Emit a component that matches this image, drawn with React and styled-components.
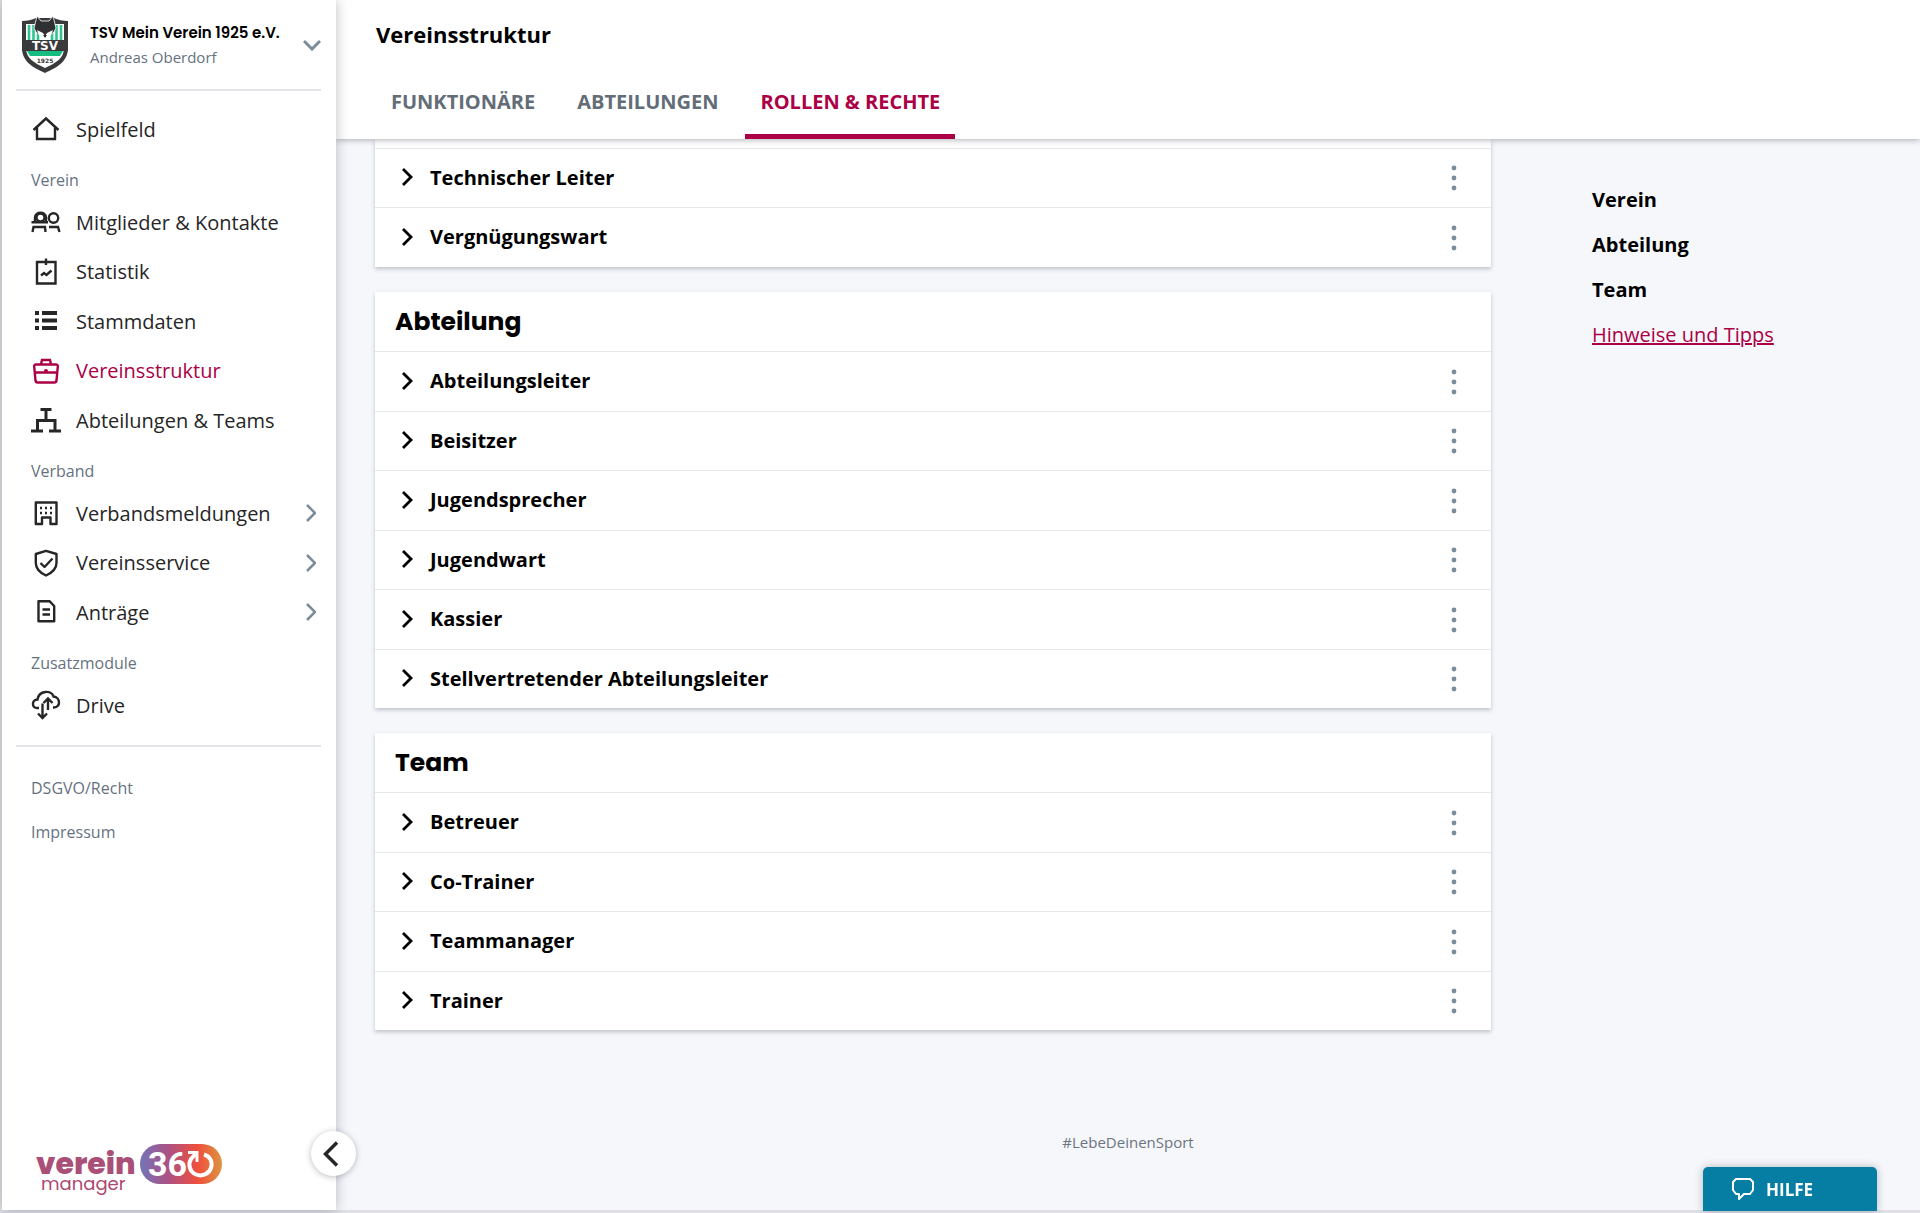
import React, { useState } from "react";
import styled, { createGlobalStyle } from "styled-components";

const sections = [
  {
    title: "Verein",
    items: [
      { icon: "members", label: "Mitglieder & Kontakte" },
      { icon: "stats", label: "Statistik" },
      { icon: "list", label: "Stammdaten" },
      { icon: "briefcase", label: "Vereinsstruktur", active: true },
      { icon: "org", label: "Abteilungen & Teams" },
    ],
  },
  {
    title: "Verband",
    items: [
      { icon: "building", label: "Verbandsmeldungen", more: true },
      { icon: "shield", label: "Vereinsservice", more: true },
      { icon: "document", label: "Anträge", more: true },
    ],
  },
  {
    title: "Zusatzmodule",
    items: [{ icon: "cloud", label: "Drive" }],
  },
];

const tabs = ["Funktionäre", "Abteilungen", "Rollen & Rechte"];

const groups = [
  {
    title: "Abteilung",
    roles: [
      "Abteilungsleiter",
      "Beisitzer",
      "Jugendsprecher",
      "Jugendwart",
      "Kassier",
      "Stellvertretender Abteilungsleiter",
    ],
  },
  {
    title: "Team",
    roles: ["Betreuer", "Co-Trainer", "Teammanager", "Trainer"],
  },
];

const icons = {
  home: <path d="M2.5 16L15 4.5L27.5 16M6 13.5V25H24V13.5" />,
  members: (
    <>
      <circle cx="9.5" cy="10.5" r="4" />
      <path d="M4 15V10.5C4 4 15 4 15 10.5V15M.5 15.3H17M1.5 25L2.5 20H14L14.5 25M18 20H27L28.5 25" />
      <circle cx="22.5" cy="11" r="4.7" />
    </>
  ),
  stats: (
    <path d="M6 5H24.5V26.5H6ZM15 1.5V8M10 18.5L13 16L15.5 18L20.5 13.5" />
  ),
  list: (
    <>
      <path d="M4 7H8M4 14.5H8M4 22H8" strokeWidth="4" />
      <path d="M11 7H26M11 14.5H26M11 22H26" strokeWidth="4" />
    </>
  ),
  briefcase: (
    <>
      <path d="M5 8.5H25Q27 8.5 26.8 10.5L25.5 24.5Q25.2 26.5 23.5 26.5H6.5Q4.8 26.5 4.5 24.5L3.2 10.5Q3 8.5 5 8.5ZM10 8L11 4H19L20 8M3.8 16.5H26.2" />
      <circle cx="15" cy="15" r="2" fill="currentColor" stroke="none" />
    </>
  ),
  org: (
    <path
      d="M9.5 4.5H20.5M15 4.5V15M0 26H12M6.5 26V15.5H24V26M18 26H30"
      strokeWidth="3"
    />
  ),
  building: (
    <>
      <path
        d="M4.8 4.5H25.5V26H19.5V19.5H11V26H4.8Z"
        strokeLinejoin="round"
      />
      <path d="M9 10H11M14 10H16M19 10H21M9 15H11M14 15H16M19 15H21" />
    </>
  ),
  shield: (
    <path
      d="M15 2.8L25.5 6V15C25.5 20.5 21.5 24.5 15 27.5C8.500 24.5 4.8 20.5 4.8 15V6ZM9.5 15L13.5 19L21.5 10.5"
      strokeLinejoin="round"
    />
  ),
  document: (
    <path
      d="M7.5 4.2H18.5L23.2 9V24.2H7.5ZM11.5 12.5H19M11.5 17.5H19"
      strokeLinejoin="round"
    />
  ),
  cloud: (
    <path d="M8 18H6C.5 18 .5 9.5 6.5 9.5C8 0 20.5 0 22.5 6.5C29.5 7 30 17.5 23 17.5H22M17 20V8.5M12.5 13L17 8.5L21.5 13M11.5 13.5V28M7 23.5L11.5 28L16 23.5" />
  ),
};

const Icon = ({ name }) => (
  <IconSvg viewBox="0 0 30 30" aria-hidden="true">
    {icons[name]}
  </IconSvg>
);

const Crest = () => (
  <svg width="48" height="58" viewBox="0 0 48 58" aria-hidden="true">
    <path
      d="M0 5C5 5 10 4 14 2H32C36 4 41 5 46 5V32C46 45 36 51 23 57C10 51 0 45 0 32Z"
      fill="#3a3a3d"
    />
    <path d="M4 8H42V32C42 42 34 47 23 52C12 47 4 42 4 32Z" fill="#fff" />
    <path
      d="M7 9V24M11.500 9V24M16 17V24M30 17V24M34.500 9V24M39 9V24"
      stroke="#2fc48d"
      strokeWidth="2.6"
    />
    <path
      d="M15 0L19 5H27L31 0L34 12L32 16L23 23L14 16L12 12Z"
      fill="#303033"
      stroke="#fff"
      strokeWidth="0.8"
    />
    <path
      d="M15 14L21 17L23 20L25 17L31 14L29 19L23 24L17 19Z"
      fill="#fff"
    />
    <path d="M21 19H25L23 22Z" fill="#303033" />
    <path d="M0 24H46V35H0Z" fill="#3a3a3d" />
    <path d="M5 35H41L38 40H8Z" fill="#16bd80" />
    <CrestText x="23" y="34" textAnchor="middle" fill="#fff">
      TSV
    </CrestText>
    <CrestYear x="23" y="47" textAnchor="middle" fill="#3a3a3d">
      1925
    </CrestYear>
  </svg>
);

const Brand = () => (
  <svg
    width="190"
    height="56"
    viewBox="0 0 190 56"
    role="img"
    aria-label="verein 360 manager"
  >
    <defs>
      <linearGradient id="pill">
        <stop offset="0" stopColor="#7374b8" />
        <stop offset="0.35" stopColor="#ad5184" />
        <stop offset="0.7" stopColor="#ef4f3d" />
        <stop offset="1" stopColor="#dd9440" />
      </linearGradient>
    </defs>
    <text>
      <BrandName x="0" y="34" fill="#a94f78">
        verein
      </BrandName>
      <BrandSub x="5" y="50" fill="#ad4770">
        manager
      </BrandSub>
    </text>
    <rect x="104" y="4" width="82" height="40" rx="20" fill="url(#pill)" />
    <BrandDigits x="112" y="36" fill="#fff">
      36
    </BrandDigits>
    <path
      d="M168 14.5C174 16 177 22 175 28C173 34 166 37 160 34.5C154 32 151.5 25 155 19L160 13.5"
      fill="none"
      stroke="#fff"
      strokeWidth="4"
    />
    <path
      d="M152 12.5H161V22"
      fill="none"
      stroke="#fff"
      strokeWidth="3"
    />
  </svg>
);

const NavItem = ({ icon, label, active, more }) => (
  <NavEntry>
    <NavLink href="#" $active={active}>
      <Icon name={icon} />
      <NavText>{label}</NavText>
      {more && (
        <MoreArrow viewBox="0 0 10 18" aria-hidden="true">
          <path d="M1 1L9 9L1 17" />
        </MoreArrow>
      )}
    </NavLink>
  </NavEntry>
);

const RoleRow = ({ name }) => (
  <Row>
    <RoleButton type="button">
      <RoleArrow viewBox="0 0 11 18" aria-hidden="true">
        <path d="M1 1L9 9L1 17" />
      </RoleArrow>
      {name}
    </RoleButton>
    <MenuButton type="button" aria-label={`Optionen ${name}`}>
      <svg width="6" height="26" viewBox="0 0 6 26" fill="currentColor">
        <circle cx="3" cy="3" r="2.4" />
        <circle cx="3" cy="13" r="2.4" />
        <circle cx="3" cy="23" r="2.4" />
      </svg>
    </MenuButton>
  </Row>
);

const App = () => {
  const [tab, setTab] = useState(tabs[2]);

  return (
    <Page>
      <GlobalStyle />
      <Sidebar>
        <ClubButton type="button">
          <Crest />
          <ClubInfo>
            <ClubName>TSV Mein Verein 1925 e.V.</ClubName>
            <UserName>Andreas Oberdorf</UserName>
          </ClubInfo>
          <ClubArrow viewBox="0 0 18 12" aria-hidden="true">
            <path d="M1 2L9 10L17 2" />
          </ClubArrow>
        </ClubButton>
        <Nav>
          <NavList>
            <NavItem icon="home" label="Spielfeld" />
          </NavList>
          {sections.map((section) => (
            <React.Fragment key={section.title}>
              <NavTitle>{section.title}</NavTitle>
              <NavList>
                {section.items.map((item) => (
                  <NavItem key={item.label} {...item} />
                ))}
              </NavList>
            </React.Fragment>
          ))}
        </Nav>
        <LegalLinks>
          <a href="#">DSGVO/Recht</a>
          <a href="#">Impressum</a>
        </LegalLinks>
        <BrandArea>
          <Brand />
        </BrandArea>
        <CollapseButton type="button" aria-label="Menü einklappen">
          <svg width="16" height="26" viewBox="0 0 16 26" aria-hidden="true">
            <path
              d="M14 1.5L2.5 13L14 24.5"
              fill="none"
              stroke="#262626"
              strokeWidth="3.5"
            />
          </svg>
        </CollapseButton>
      </Sidebar>

      <Main>
        <Header>
          <Title>Vereinsstruktur</Title>
          <Tabs role="tablist">
            {tabs.map((name) => (
              <Tab
                key={name}
                type="button"
                role="tab"
                aria-selected={tab === name}
                $active={tab === name}
                onClick={() => setTab(name)}
              >
                {name}
              </Tab>
            ))}
          </Tabs>
        </Header>
        <Content>
          <Groups>
            <Card $continued>
              <RoleRow name="Technischer Leiter" />
              <RoleRow name="Vergnügungswart" />
            </Card>
            {groups.map((group) => (
              <Card key={group.title}>
                <CardTitle>{group.title}</CardTitle>
                {group.roles.map((role) => (
                  <RoleRow key={role} name={role} />
                ))}
              </Card>
            ))}
          </Groups>
          <Anchors>
            <AnchorLink href="#">Verein</AnchorLink>
            <AnchorLink href="#">Abteilung</AnchorLink>
            <AnchorLink href="#">Team</AnchorLink>
            <TipsLink href="#">Hinweise und Tipps</TipsLink>
          </Anchors>
        </Content>
        <Footer>#LebeDeinenSport</Footer>
      </Main>

      <HelpButton type="button">
        <svg width="24" height="24" viewBox="0 0 24 24" aria-hidden="true">
          <path
            d="M5 2H19L22 5V13L19 17H13L8 22V17H5L2 13V5Z"
            fill="none"
            stroke="#fff"
            strokeWidth="2"
            strokeLinejoin="round"
          />
        </svg>
        HILFE
      </HelpButton>
    </Page>
  );
};

const GlobalStyle = createGlobalStyle`
  * {
    box-sizing: border-box;
  }
  body {
    margin: 0;
    background-color: #f5f7fb;
    color: #000;
    font-family: "Open Sans", "Noto Sans", sans-serif;
    font-size: 20px;
  }
  button {
    border: 0;
    padding: 0;
    background: none;
    color: inherit;
    font: inherit;
    cursor: pointer;
  }
`;

const Page = styled.div`
  display: flex;
  min-height: 100vh;
  border-left: 2px solid #e2e3e7;
  border-bottom: 3px solid #dfdfe5;
`;

const Sidebar = styled.aside`
  position: relative;
  z-index: 2;
  display: flex;
  flex-direction: column;
  flex: 0 0 334px;
  background-color: #fff;
  box-shadow: 0 0 12px rgba(30, 35, 50, 0.3);
`;

const ClubButton = styled.button`
  display: flex;
  align-items: center;
  height: 91px;
  margin: 0 15px 0 14px;
  padding-left: 6px;
  gap: 20px;
  border-bottom: 2px solid #e3e5e8;
  text-align: left;
`;

const ClubInfo = styled.span`
  display: flex;
  flex: 1;
  flex-direction: column;
`;

const ClubName = styled.span`
  font-family: Poppins, Inter, sans-serif;
  font-size: 15px;
  line-height: 24px;
  font-weight: 600;
  white-space: nowrap;
`;

const UserName = styled.span`
  font-size: 15px;
  line-height: 24px;
  color: #66727f;
`;

const ClubArrow = styled.svg`
  width: 18px;
  height: 12px;
  fill: none;
  stroke: #7b8d9a;
  stroke-width: 3;
`;

const Nav = styled.nav`
  padding-top: 13px;
`;

const NavList = styled.ul`
  margin: 0;
  padding: 0;
  list-style: none;
`;

const NavEntry = styled.li`
  height: 50px;

  &:nth-child(even) {
    height: 49px;
  }
`;

const NavLink = styled.a`
  display: flex;
  align-items: center;
  height: 100%;
  gap: 15px;
  padding: 0 20px 0 29px;
  color: ${({ $active }) => ($active ? "#ab0046" : "#262626")};
  text-decoration: none;
`;

const NavText = styled.span`
  flex: 1;
  white-space: nowrap;
`;

const NavTitle = styled.h2`
  margin: 0;
  padding: 14px 29px 5px;
  font-size: 16px;
  line-height: 24px;
  font-weight: 400;
  color: #66727f;
`;

const IconSvg = styled.svg`
  width: 30px;
  height: 30px;
  fill: none;
  stroke: currentColor;
  stroke-width: 2.4;
  overflow: visible;
`;

const MoreArrow = styled.svg`
  width: 10px;
  height: 18px;
  fill: none;
  stroke: #7b8d9a;
  stroke-width: 2.5;
`;

const LegalLinks = styled.div`
  display: flex;
  flex-direction: column;
  gap: 20px;
  margin: 15px 15px 0 14px;
  padding: 29px 15px;
  border-top: 2px solid #e3e5e8;
  font-size: 16px;
  line-height: 24px;

  a {
    color: #66727f;
    text-decoration: none;
  }
`;

const BrandArea = styled.div`
  display: flex;
  margin-top: auto;
  padding: 0 34px 14px;
`;

const BrandName = styled.tspan`
  font-family: Poppins, Inter, sans-serif;
  font-size: 30px;
  font-weight: 800;
`;

const BrandSub = styled.tspan`
  font-family: Poppins, Inter, sans-serif;
  font-size: 18px;
`;

const BrandDigits = styled.text`
  font-family: Roboto, sans-serif;
  font-size: 34px;
  font-weight: 700;
`;

const CrestText = styled.text`
  font-family: "DejaVu Sans", sans-serif;
  font-size: 12px;
  font-weight: 700;
`;

const CrestYear = styled.text`
  font-family: "DejaVu Sans", sans-serif;
  font-size: 6px;
  font-weight: 700;
`;

const CollapseButton = styled.button`
  position: absolute;
  right: -20px;
  bottom: 34px;
  display: flex;
  align-items: center;
  justify-content: center;
  width: 45px;
  height: 45px;
  padding-right: 6px;
  border-radius: 50%;
  background-color: #fff;
  box-shadow: 0 1px 6px rgba(30, 35, 50, 0.3);
`;

const Main = styled.main`
  flex: 1;
  min-width: 0;
`;

const Header = styled.header`
  position: relative;
  z-index: 1;
  padding: 17px 40px 0;
  background-color: #fff;
  box-shadow: 0 1px 6px rgba(30, 35, 50, 0.35);
`;

const Title = styled.h1`
  margin: 0;
  font-size: 22px;
  line-height: 34px;
  font-weight: 700;
`;

const Tabs = styled.div`
  display: flex;
  gap: 12px;
  padding-top: 15px;
`;

const Tab = styled.button`
  height: 73px;
  padding: 3px 15px 0;
  border-bottom: 5px solid
    ${({ $active }) => ($active ? "#ab0046" : "transparent")};
  color: ${({ $active }) => ($active ? "#ab0046" : "#626d78")};
  font-weight: 700;
  text-transform: uppercase;
`;

const Content = styled.div`
  display: flex;
  gap: 101px;
  padding-left: 39px;
`;

const Groups = styled.div`
  display: flex;
  flex: 1;
  flex-direction: column;
  gap: 25px;
`;

const Card = styled.section`
  padding-top: ${({ $continued }) => ($continued ? "9px" : "0")};
  background-color: #fff;
  box-shadow: 0 2px 4px rgba(30, 35, 50, 0.25);
`;

const CardTitle = styled.h2`
  height: 59px;
  margin: 0;
  padding: 0 20px;
  font-family: Poppins, Inter, sans-serif;
  font-size: 25px;
  line-height: 60px;
  font-weight: 700;
`;

const Row = styled.div`
  display: flex;
  align-items: center;
  height: 59px;
  padding: 0 25px 0 27px;
  border-top: 1px solid #e6e8ec;

  &:nth-child(even) {
    height: 60px;
  }
`;

const RoleButton = styled.button`
  display: flex;
  align-items: center;
  flex: 1;
  height: 100%;
  padding-bottom: 2px;
  gap: 17px;
  font-weight: 700;
  text-align: left;
`;

const RoleArrow = styled.svg`
  width: 11px;
  height: 18px;
  fill: none;
  stroke: #000;
  stroke-width: 2.8;
`;

const MenuButton = styled.button`
  display: flex;
  align-items: center;
  justify-content: center;
  width: 24px;
  height: 40px;
  color: #7b8d9a;
`;

const Anchors = styled.nav`
  display: flex;
  flex: 0 0 328px;
  flex-direction: column;
  align-items: flex-start;
  gap: 17px;
  padding-top: 47px;
  line-height: 28px;
`;

const AnchorLink = styled.a`
  color: #000;
  font-weight: 700;
  text-decoration: none;
`;

const TipsLink = styled.a`
  color: #ab0046;
`;

const Footer = styled.footer`
  padding: 100px 0 54px;
  font-size: 15px;
  line-height: 24px;
  text-align: center;
  color: #6c757e;
`;

const HelpButton = styled.button`
  position: fixed;
  right: 43px;
  bottom: 2px;
  z-index: 3;
  display: flex;
  align-items: center;
  width: 174px;
  height: 44px;
  padding-left: 28px;
  gap: 11px;
  border-radius: 5px 5px 0 0;
  background-color: #067ea3;
  box-shadow: 0 0 8px rgba(30, 35, 50, 0.3);
  color: #fff;
  font-size: 17px;
  font-weight: 700;
`;

export default App;
